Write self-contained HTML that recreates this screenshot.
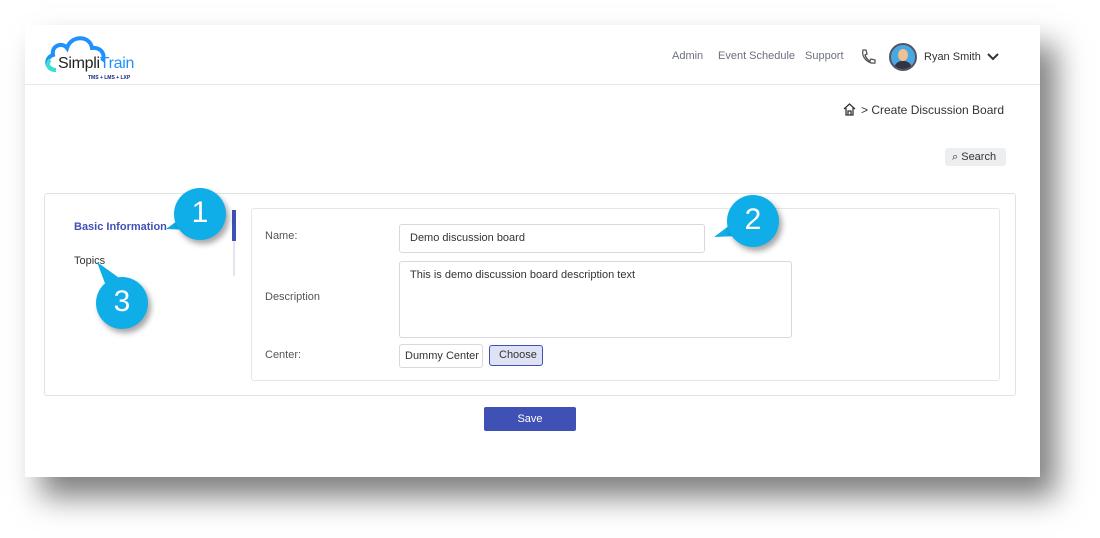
<!DOCTYPE html>
<html><head><style>
body{margin:0;width:1100px;height:538px;background:#fff;font-family:"Liberation Sans",sans-serif;position:relative;overflow:hidden}
.card{position:absolute;left:25px;top:25px;width:1015px;height:452px;background:#fff;box-shadow:16px 20px 28px rgba(0,0,0,.5)}
.hdr{position:absolute;left:0;top:0;width:1015px;height:59px;border-bottom:1px solid #e8e8e8}
.a{position:absolute;font-size:11px;color:#6b7080}
.panel{position:absolute;left:19px;top:168px;width:970px;height:201px;border:1px solid #e2e2e2;border-radius:3px}
.inner{position:absolute;left:226px;top:183px;width:747px;height:171px;border:1px solid #e6e6e6;border-radius:3px}
.lbl{position:absolute;font-size:11px;color:#555}
.inp{position:absolute;border:1px solid #d8d8e0;border-radius:3px;font-size:11px;color:#333;box-sizing:border-box;padding-left:10px}
.bub{position:absolute;width:52px;height:52px;border-radius:50%;background:#10aee8;color:#fff;font-size:30px;text-align:center;line-height:50px;box-shadow:3px 4px 6px rgba(0,0,0,.35)}
</style></head><body>
<div class="card">
 <div class="hdr">
  <svg style="position:absolute;left:19px;top:9px" width="78" height="40" viewBox="0 0 78 40">
   <path d="M12 36 C2 36 0 24 9 21 C7 11 19 8 23 14 C27 1 46 1 48 14 C58 13 62 22 58 27" fill="none" stroke="#1e90ff" stroke-width="4"/>
   <path d="M12 36 C4 36 2 30 6 26" fill="none" stroke="#3de0d0" stroke-width="4"/>
  </svg>
  <div style="position:absolute;left:33px;top:30px;font-size:16px;color:#222;letter-spacing:-0.3px">Simpli<span style="color:#1e90ff">Train</span></div>
  <div style="position:absolute;left:63px;top:50px;font-size:5px;color:#1a237e;font-weight:bold">TMS + LMS + LXP</div>
  <div class="a" style="left:647px;top:25px">Admin</div>
  <div class="a" style="left:693px;top:25px">Event Schedule</div>
  <div class="a" style="left:780px;top:25px">Support</div>
  <svg style="position:absolute;left:835px;top:24px" width="16" height="16" viewBox="0 0 16 16"><path d="M3 1 L6 1 L7 5 L5 6 C6 9 8 11 10 12 L11 10 L15 11 L15 14 C8 15 1 8 3 1Z" fill="none" stroke="#555" stroke-width="1.3"/></svg>
  <div style="position:absolute;left:864px;top:18px;width:24px;height:24px;border-radius:50%;background:#4aa8e0;border:2px solid #556;overflow:hidden"><div style="position:absolute;left:7px;top:4px;width:10px;height:12px;border-radius:50%;background:#f0c090"></div><div style="position:absolute;left:3px;top:16px;width:18px;height:9px;background:#334;border-radius:8px 8px 0 0"></div></div>
  <div style="position:absolute;left:899px;top:26px;font-size:11px;color:#333">Ryan Smith</div>
  <svg style="position:absolute;left:962px;top:28px" width="12" height="8"><path d="M1 1 L6 6 L11 1" fill="none" stroke="#333" stroke-width="2"/></svg>
 </div>
 <svg style="position:absolute;left:818px;top:78px" width="13" height="13" viewBox="0 0 13 13"><path d="M1 6 L6.5 1 L12 6 M3 5 V12 H10 V5 M5 12 V8 H8 V12" fill="none" stroke="#333" stroke-width="1.3"/></svg>
 <div style="position:absolute;left:836px;top:78px;font-size:12px;color:#333">&gt;&nbsp;Create Discussion Board</div>
 <div style="position:absolute;left:920px;top:123px;width:61px;height:18px;background:#eceef0;border-radius:3px;font-size:11px;color:#333;line-height:18px"><span style="margin-left:7px">⌕</span> Search</div>
 <div class="panel"></div>
 <div style="position:absolute;left:49px;top:196px;font-size:11px;font-weight:bold;color:#3f51b5">Basic Information</div>
 <div style="position:absolute;left:49px;top:230px;font-size:11px;color:#333">Topics</div>
 <div style="position:absolute;left:208px;top:185px;width:2px;height:66px;background:#e4e4ee"></div>
 <div style="position:absolute;left:207px;top:185px;width:4px;height:31px;background:#3f51b5"></div>
 <div class="inner"></div>
 <div class="lbl" style="left:240px;top:205px">Name:</div>
 <div class="lbl" style="left:240px;top:266px">Description</div>
 <div class="lbl" style="left:240px;top:324px">Center:</div>
 <div class="inp" style="left:374px;top:199px;width:306px;height:29px;line-height:27px">Demo discussion board</div>
 <div class="inp" style="left:374px;top:236px;width:393px;height:77px;padding-top:7px">This is demo discussion board description text</div>
 <div class="inp" style="left:374px;top:319px;width:84px;height:24px;line-height:22px;padding-left:5px">Dummy Center</div>
 <div class="inp" style="left:464px;top:320px;width:54px;height:21px;line-height:19px;background:#dfe2f4;border-color:#3f51b5;padding-left:9px">Choose</div>
 <div style="position:absolute;left:459px;top:382px;width:92px;height:24px;background:#3f51b5;border-radius:2px;color:#fff;font-size:11px;text-align:center;line-height:24px">Save</div>
</div>
<svg style="position:absolute;left:0;top:0" width="1100" height="538">
 <polygon points="166,229 184,216 192,230" fill="#10aee8"/>
 <polygon points="714,237 734,222 738,236" fill="#10aee8"/>
 <polygon points="97,262 106,286 122,280" fill="#10aee8"/>
</svg>
<div class="bub" style="left:174px;top:188px">1</div>
<div class="bub" style="left:727px;top:195px">2</div>
<div class="bub" style="left:96px;top:277px">3</div>
</body></html>
